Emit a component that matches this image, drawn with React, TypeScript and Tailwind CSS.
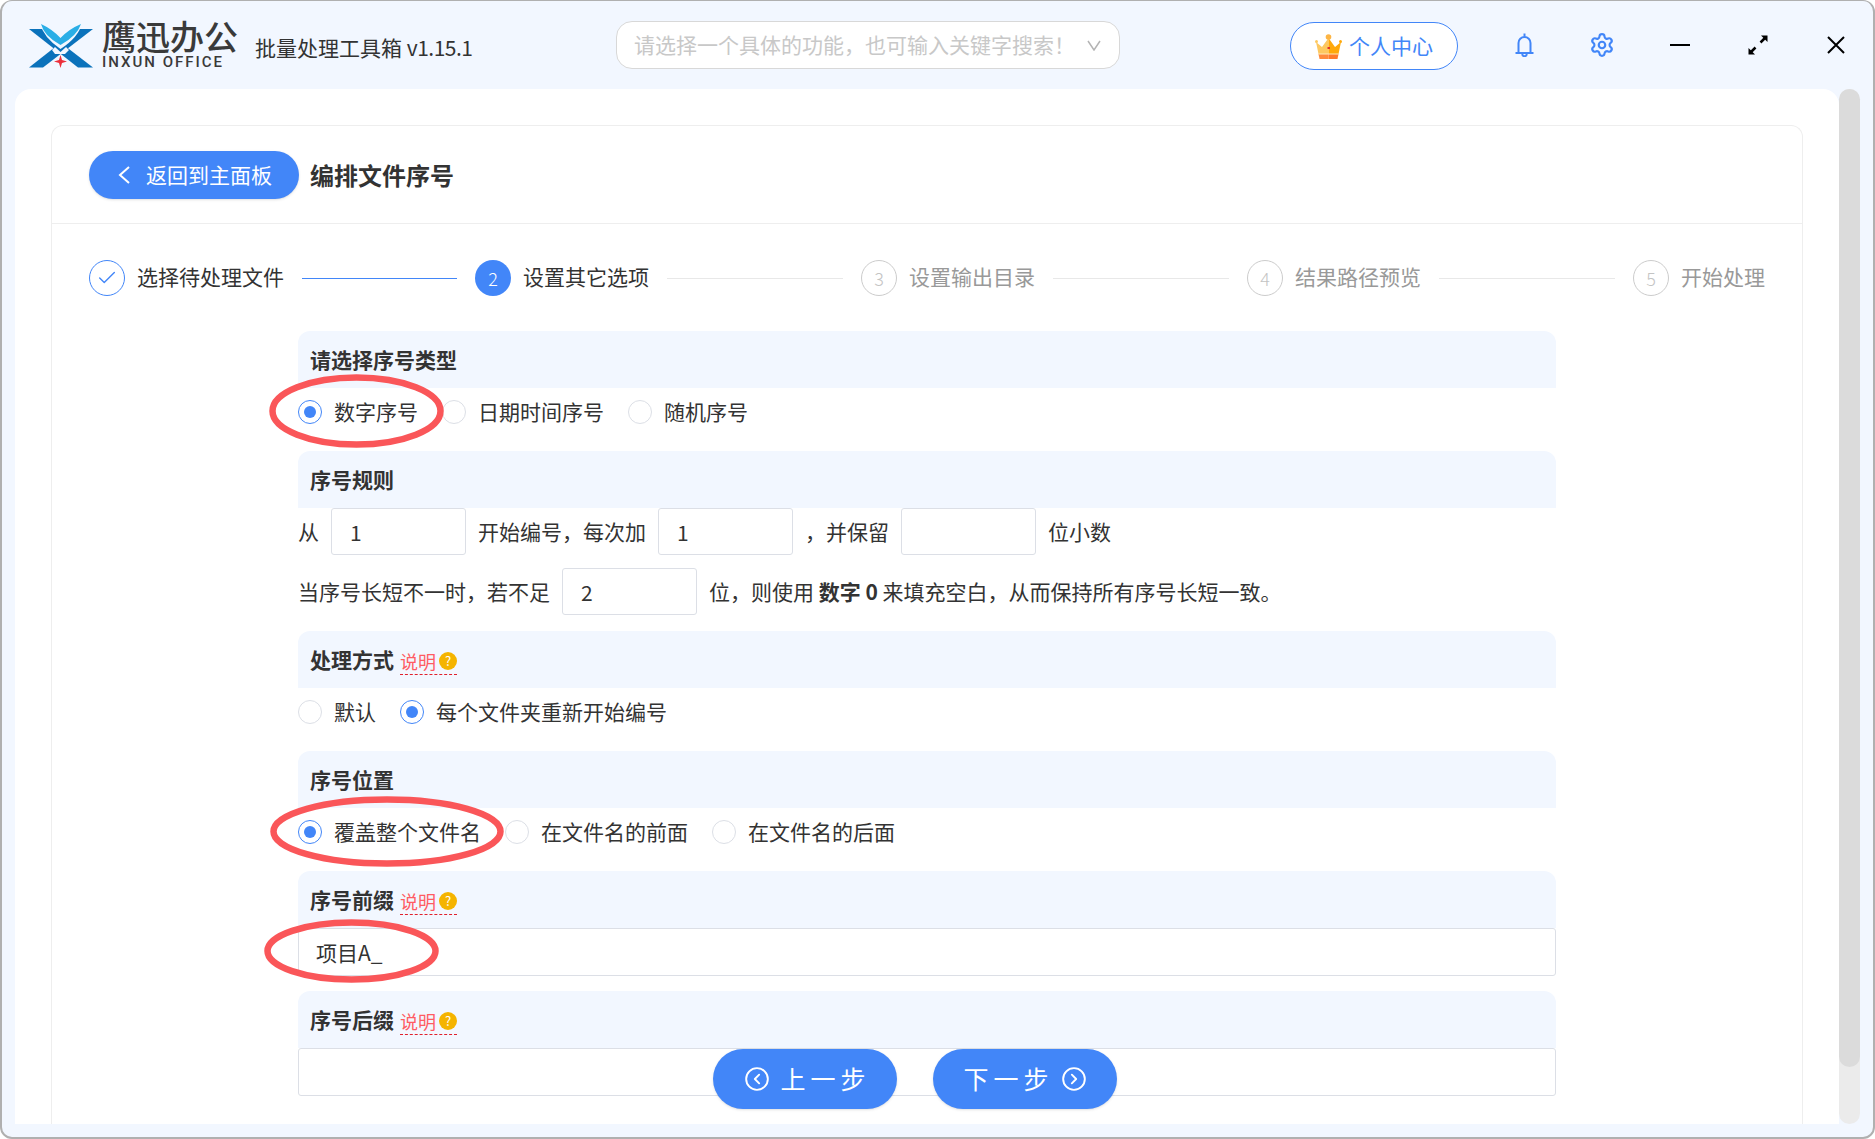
import { CircleChevronLeft, CircleChevronRight, Settings, Check } from "lucide-react";

const Logo = () => (
  <svg width="64" height="45" viewBox="0 0 64 45" className="shrink-0">
    <polygon points="0,6 14,6 64,44.500 49,44.500" fill="#0b72bb" />
    <polygon points="0,44.500 14,44.500 64,6 49,6" fill="#0b72bb" />
    <path d="M11 0Q23 5 31.500 14Q40 5 53 0Q50 14 31.500 26Q14 14 11 0Z" fill="#f2f7ff" />
    <path d="M12 1Q23 6 31.500 15Q40 6 52 1Q48 13 31.500 22Q15 13 12 1Z" fill="#2aaee6" />
    <path d="M26 24L31.500 29L37 24L40 27L36 31L26 31L23 27Z" fill="#f2f7ff" />
    <path d="M31.500 32L33 37L38 38.500L33 40L31.500 45L30 40L25 38.500L30 37Z" fill="#ec2f3b" />
  </svg>
);

const Crown = () => (
  <svg width="27" height="25" viewBox="0 0 27 25" className="shrink-0">
    <path d="M1 8L7 13L13.500 4V20H3.500Z" fill="#fdc860" />
    <path d="M26 8L20 13L13.500 4V20H23.500Z" fill="#ffa90a" />
    <path d="M3.500 20H13.500V25H4.500Z" fill="#ff8a3c" />
    <path d="M13.500 20H23.500L22.500 25H13.500Z" fill="#ff7a2a" />
    <rect x="3.500" y="19.500" width="20" height="1" fill="#ffe6b8" />
    <circle cx="13.500" cy="3" r="2.800" fill="#fdb544" />
    <circle cx="1.500" cy="7.500" r="1.500" fill="#fdc860" />
    <circle cx="25.500" cy="7.500" r="1.500" fill="#ffa90a" />
    <rect x="12.500" y="13" width="2.500" height="2" fill="#e0322b" />
  </svg>
);

const Bell = () => (
  <svg width="19" height="24" viewBox="0 0 19 24" fill="none" stroke="#4286f8" strokeWidth="2" className="shrink-0">
    <path d="M3.500 20V10a6 6 0 0 1 12 0v10" />
    <path d="M0.500 20h18" />
    <path d="M9.500 0.500v3" />
    <path d="M7.300 21a2.200 2.200 0 0 0 4.400 0" />
  </svg>
);

const Expand = () => (
  <svg width="20" height="20" viewBox="0 0 20 20" className="shrink-0">
    <path d="M2.500 17.500L7.500 12.500" stroke="#000" strokeWidth="2.500" />
    <path d="M12.500 7.500L17.500 2.500" stroke="#000" strokeWidth="2.500" />
    <path d="M0.500 13V19.500H7Z" fill="#000" />
    <path d="M13 0.500H19.500V7Z" fill="#000" />
  </svg>
);

const Close = () => (
  <svg width="18" height="18" viewBox="0 0 18 18" stroke="#000" strokeWidth="2" className="shrink-0">
    <path d="M1 1L17 17M17 1L1 17" />
  </svg>
);

const Radio = ({ label, checked = false }: { label: string; checked?: boolean }) => (
  <div className="flex items-center gap-[12px]">
    <span
      className={`flex h-[24px] w-[24px] items-center justify-center rounded-full border bg-white ${
        checked ? "border-[#4286f8]" : "border-[#dcdfe6]"
      }`}
    >
      {checked && <span className="h-[12px] w-[12px] rounded-full bg-[#4286f8]" />}
    </span>
    <span className="text-[21px] text-[#333]">{label}</span>
  </div>
);

const SectionHead = ({ title, hint = false }: { title: string; hint?: boolean }) => (
  <div className="flex h-[57px] items-center rounded-t-xl bg-[#f2f7ff] pl-[12px]">
    <span className="text-[21px] font-bold text-[#333]">{title}</span>
    {hint && (
      <span className="ml-[6px] mt-[4px] flex items-center gap-[3px] border-b border-dashed border-[#e0202c] pb-[1px]">
        <span className="text-[18px] leading-[24px] text-[#ff5c63]">说明</span>
        <span className="flex h-[18px] w-[18px] items-center justify-center rounded-full bg-[#f5b400] text-[13px] leading-none text-white">
          ?
        </span>
      </span>
    )}
  </div>
);

const NumInput = ({ value = "" }: { value?: string }) => (
  <input
    readOnly
    value={value}
    className="h-[47px] w-[135px] rounded-[3px] border border-[#dcdfe6] bg-white px-[18px] text-[21px] text-[#333] outline-none"
  />
);

const TextInput = ({ value = "" }: { value?: string }) => (
  <input
    readOnly
    value={value}
    className="h-[48px] w-full rounded-[3px] border border-[#dcdfe6] bg-white px-[17px] text-[21px] text-[#333] outline-none"
  />
);

const StepNum = ({ n }: { n: number }) => (
  <span className="flex h-[36px] w-[36px] shrink-0 items-center justify-center rounded-full border border-[#cccccc] text-[18px] font-light text-[#c4c4c4]">
    {n}
  </span>
);

const Steps = () => (
  <div className="ml-[37px] mt-[36px] flex h-[36px] items-center">
    <span className="flex h-[36px] w-[36px] shrink-0 items-center justify-center rounded-full border border-[#4286f8] text-[#4286f8]">
      <Check size={22} strokeWidth={1.5} />
    </span>
    <span className="mb-[2px] ml-[12px] text-[21px] text-[#333]">选择待处理文件</span>
    <span className="mx-[18px] h-px w-[155px] bg-[#4286f8]" />
    <span className="flex h-[36px] w-[36px] shrink-0 items-center justify-center rounded-full bg-[#4286f8] text-[18px] font-light text-white">
      2
    </span>
    <span className="mb-[2px] ml-[12px] text-[21px] text-[#333]">设置其它选项</span>
    <span className="mx-[18px] h-px w-[176px] bg-[#e8e8e8]" />
    <StepNum n={3} />
    <span className="mb-[2px] ml-[12px] text-[21px] text-[#999]">设置输出目录</span>
    <span className="mx-[18px] h-px w-[176px] bg-[#e8e8e8]" />
    <StepNum n={4} />
    <span className="mb-[2px] ml-[12px] text-[21px] text-[#999]">结果路径预览</span>
    <span className="mx-[18px] h-px w-[176px] bg-[#e8e8e8]" />
    <StepNum n={5} />
    <span className="mb-[2px] ml-[12px] text-[21px] text-[#999]">开始处理</span>
  </div>
);

const Form = () => (
  <div className="ml-[246px] mt-[35px] w-[1258px]">
    <SectionHead title="请选择序号类型" />
    <div className="mb-[15px] flex h-[48px] items-center gap-[24px]">
      <Radio label="数字序号" checked />
      <Radio label="日期时间序号" />
      <Radio label="随机序号" />
    </div>

    <SectionHead title="序号规则" />
    <div className="flex h-[47px] items-center gap-[12px] text-[21px] text-[#333]">
      <span>从</span>
      <NumInput value="1" />
      <span>开始编号，每次加</span>
      <NumInput value="1" />
      <span>，并保留</span>
      <NumInput />
      <span>位小数</span>
    </div>
    <div className="mb-[16px] mt-[13px] flex h-[47px] items-center gap-[12px] text-[21px] text-[#333]">
      <span>当序号长短不一时，若不足</span>
      <NumInput value="2" />
      <span>
        位，则使用 <b>数字 0</b> 来填充空白，从而保持所有序号长短一致。
      </span>
    </div>

    <SectionHead title="处理方式" hint />
    <div className="mb-[15px] flex h-[48px] items-center gap-[24px]">
      <Radio label="默认" />
      <Radio label="每个文件夹重新开始编号" checked />
    </div>

    <SectionHead title="序号位置" />
    <div className="mb-[15px] flex h-[48px] items-center gap-[24px]">
      <Radio label="覆盖整个文件名" checked />
      <Radio label="在文件名的前面" />
      <Radio label="在文件名的后面" />
    </div>

    <SectionHead title="序号前缀" hint />
    <div className="mb-[15px]">
      <TextInput value="项目A_" />
    </div>

    <SectionHead title="序号后缀" hint />
    <TextInput />
  </div>
);

// red annotation rings over the form
const Ring = ({ className, w, h }: { className: string; w: number; h: number }) => (
  <svg width={w} height={h} viewBox={`0 0 ${w} ${h}`} fill="none" className={className}>
    <ellipse cx={w / 2} cy={h / 2} rx={w / 2 - 3.5} ry={h / 2 - 3.5} stroke="#fa5659" strokeWidth="6.500" />
  </svg>
);

export default function App() {
  return (
    <div className="relative h-[1139px] w-[1875px] overflow-hidden bg-white font-['Noto_Sans_CJK_SC',sans-serif]">
      <div className="flex h-full w-full flex-col rounded-[12px] border-2 border-t border-[#b0b0b0] bg-[#f2f7ff]">
        <header className="flex h-[88px] shrink-0 items-center">
          <div className="ml-[27px]">
            <Logo />
          </div>
          <div className="-mt-[2px] ml-[9px] flex w-[135px] shrink-0 flex-col">
            <span className="whitespace-nowrap text-[34px] font-medium leading-[35px] text-[#3a3a3a]">鹰迅办公</span>
            <span className="mt-[2px] whitespace-nowrap font-['Roboto',sans-serif] text-[15px] font-medium leading-[15px] tracking-[2px] text-[#3a3a3a]">
              INXUN OFFICE
            </span>
          </div>
          <span className="ml-[18px] mt-[6px] w-[361px] shrink-0 text-[21px] text-[#333]">
            批量处理工具箱 <span className="tracking-[-0.5px]">v1.15.1</span>
          </span>
          <div className="flex h-[48px] w-[504px] shrink-0 items-center justify-between rounded-2xl border border-[#d8d8d8] bg-white pl-[17px] pr-[18px]">
            <span className="whitespace-nowrap text-[21px] text-[#c8c8c8]">请选择一个具体的功能，也可输入关键字搜索！</span>
            <svg width="14" height="11" viewBox="0 0 14 11" fill="none" stroke="#b4b4b4" strokeWidth="1.500">
              <path d="M1 1L7 10L13 1" />
            </svg>
          </div>
          <div className="ml-[170px] mt-[2px] flex h-[48px] w-[168px] shrink-0 items-center gap-[7px] rounded-full border border-[#4286f8] bg-white pl-[24px]">
            <Crown />
            <span className="whitespace-nowrap text-[21px] text-[#4286f8]">个人中心</span>
          </div>
          <div className="ml-[57px]">
            <Bell />
          </div>
          <Settings size={26} strokeWidth={2} color="#4286f8" className="ml-[55px] shrink-0" />
          <span className="ml-[55px] h-[2px] w-[20px] shrink-0 bg-black" />
          <div className="ml-[58px]">
            <Expand />
          </div>
          <div className="ml-[59px]">
            <Close />
          </div>
        </header>

        <div className="flex min-h-0 flex-1 pb-[13px] pl-[13px]">
          <main className="min-w-0 flex-1 rounded-t-2xl bg-white pl-[36px] pr-[36px] pt-[36px]">
            <div className="h-full rounded-t-xl border border-b-0 border-[#eeeeee]">
              <div className="flex h-[98px] items-center border-b border-[#eeeeee] pl-[37px]">
                <button className="flex h-[48px] w-[210px] items-center rounded-full bg-[#4286f8] pl-[29px] text-[21px] text-white shadow-sm">
                  <svg width="12" height="18" viewBox="0 0 12 18" fill="none" stroke="#fff" strokeWidth="2" className="mr-[16px]">
                    <path d="M11 1L2 9L11 17" />
                  </svg>
                  返回到主面板
                </button>
                <span className="ml-[11px] text-[24px] font-bold text-[#333]">编排文件序号</span>
              </div>
              <Steps />
              <Form />
            </div>
          </main>
          <div className="mr-[13px] w-[21px] shrink-0 rounded-full bg-[#ebebeb]">
            <div className="h-[978px] rounded-full bg-[#dbdbdb]" />
          </div>
        </div>
      </div>

      <Ring w={175} h={74} className="absolute left-[269px] top-[374px]" />
      <Ring w={234} h={71} className="absolute left-[270px] top-[796px]" />
      <Ring w={175} h={64} className="absolute left-[264px] top-[919px]" />

      <button className="absolute left-[713px] top-[1049px] flex h-[60px] w-[184px] items-center justify-center gap-[10px] rounded-full bg-[#4286f8] text-[25px] tracking-[5px] text-white shadow-sm">
        <CircleChevronLeft size={26} strokeWidth={1.75} />
        <span className="-mr-[5px]">上一步</span>
      </button>
      <button className="absolute left-[933px] top-[1049px] flex h-[60px] w-[184px] items-center justify-center gap-[12px] rounded-full bg-[#4286f8] text-[25px] tracking-[5px] text-white shadow-sm">
        <span>下一步</span>
        <CircleChevronRight size={26} strokeWidth={1.75} className="-ml-[5px]" />
      </button>
    </div>
  );
}
